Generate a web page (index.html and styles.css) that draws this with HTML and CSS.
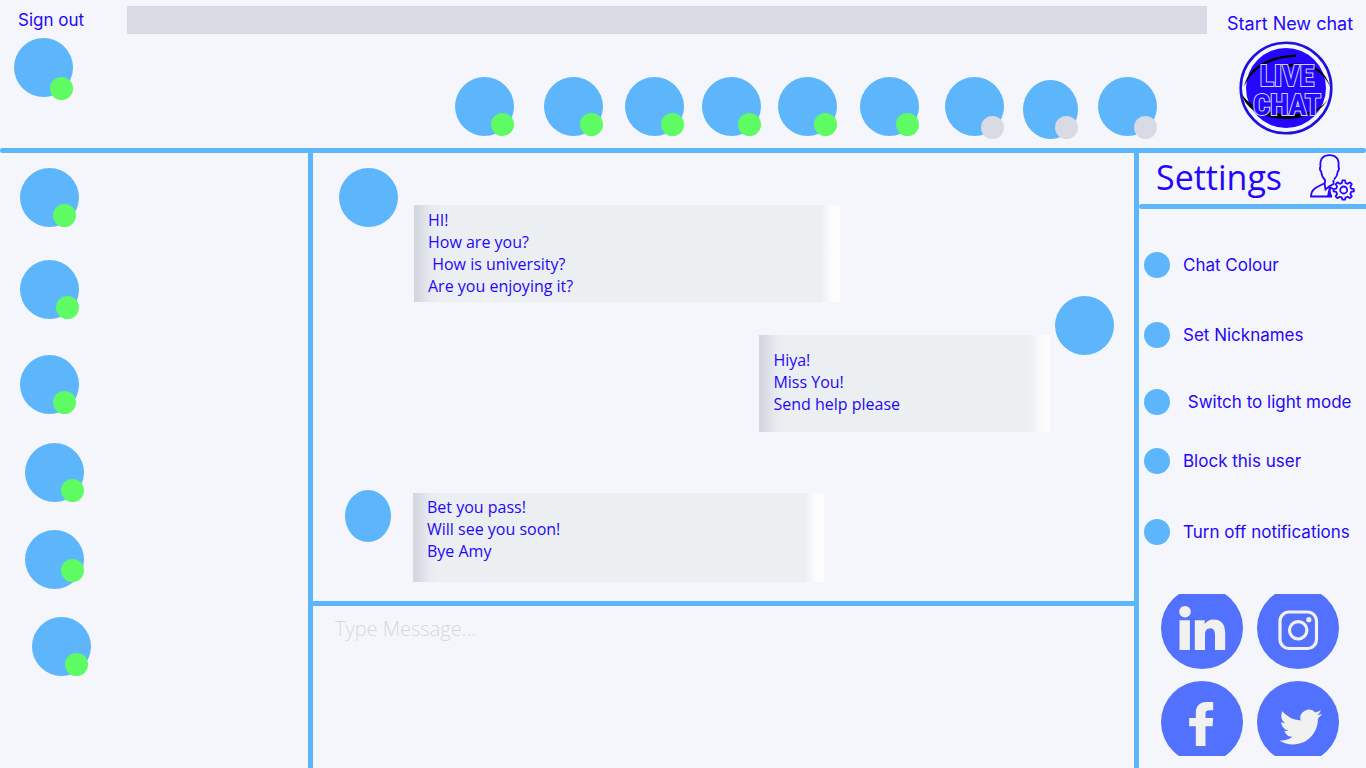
FILE: index.html
```html
<!DOCTYPE html>
<html lang="en">
<head>
  <meta charset="utf-8">
  <meta name="viewport" content="width=device-width, initial-scale=1">
  <title>Live Chat</title>
  <link rel="stylesheet" href="styles.css">
</head>
<body>
  <header class="topbar">
    <div class="account">
      <a class="link" href="#signout">Sign out</a>
      <span class="avatar"><span class="status status--low"></span></span>
    </div>

    <div class="people">
      <input class="search" type="search" aria-label="Search people">
      <ul class="people-list">
        <li><span class="avatar"><span class="status"></span></span></li>
        <li><span class="avatar"><span class="status"></span></span></li>
        <li><span class="avatar"><span class="status"></span></span></li>
        <li><span class="avatar"><span class="status"></span></span></li>
        <li><span class="avatar"><span class="status"></span></span></li>
        <li><span class="avatar"><span class="status"></span></span></li>
        <li><span class="avatar"><span class="status status--away status--low"></span></span></li>
        <li class="people-slim"><span class="avatar avatar--slim"><span class="status status--away"></span></span></li>
        <li><span class="avatar"><span class="status status--away status--low"></span></span></li>
      </ul>
    </div>

    <button class="new-chat" type="button">
      <span class="link link--large">Start New chat</span>
      <svg class="logo" viewBox="0 0 94 94" role="img" aria-label="Live chat">
        <circle cx="47" cy="47" r="45.3" fill="#f5f6fc" stroke="#1f10e0" stroke-width="2.6"/>
        <circle cx="47" cy="47" r="40" fill="#2407ff"/>
        <path d="M5 46C8 27 30 14 57 13.500V16C33 16 12 28 5 46Z"/>
        <path d="M36 27.500C57 18 85 21 91 46C83 24 58 20.500 36 29.500Z"/>
        <path d="M3 53C9 84 80 88 90.500 54C84 80 18 80 3 53Z"/>
        <text class="logo-text"><tspan x="48" y="45">LIVE</tspan><tspan x="48" y="74">CHAT</tspan></text>
      </svg>
    </button>
  </header>

  <div class="rule"></div>

  <div class="workspace">
    <nav class="contacts" aria-label="Contacts">
      <ul class="contacts-list">
        <li><span class="avatar"><span class="status status--inner"></span></span></li>
        <li><span class="avatar"><span class="status"></span></span></li>
        <li><span class="avatar"><span class="status status--inner"></span></span></li>
        <li class="indent"><span class="avatar"><span class="status"></span></span></li>
        <li class="indent"><span class="avatar"><span class="status status--high"></span></span></li>
        <li class="indent-more"><span class="avatar"><span class="status status--inner"></span></span></li>
      </ul>
    </nav>

    <main class="chat">
      <div class="thread">
        <article class="message">
          <span class="avatar"></span>
          <p class="bubble bubble--long">HI!
How are you?
 How is university?
Are you enjoying it?</p>
        </article>
        <article class="message message--own">
          <p class="bubble bubble--own">Hiya!
Miss You!
Send help please</p>
          <span class="avatar"></span>
        </article>
        <article class="message message--last">
          <span class="avatar avatar--small"></span>
          <p class="bubble bubble--last">Bet you pass!
Will see you soon!
Bye Amy</p>
        </article>
      </div>
      <div class="divider"></div>
      <textarea class="composer" aria-label="Message" placeholder="Type Message..."></textarea>
    </main>

    <aside class="settings">
      <div class="settings-head">
        <h1 class="settings-title">Settings</h1>
        <svg class="settings-icon" viewBox="0 0 48 50" aria-hidden="true" fill="none" stroke="#2407fa" stroke-width="1.800">
          <path d="M17 31V28C15 26 13.500 23 13.300 20C11.800 18 11.500 16 12.500 14.500C11.500 6 16 3.200 21.500 3.200S31.500 6 30.500 14.500C31.500 16 31 18 29.700 20C29.500 23 28 25.500 26 27.500"/>
          <path d="M17 31C10 35 3 36 3 44.500H24"/>
          <path d="M16.500 31L17.500 37.500L21 34.500L25 37M25.500 28V32L21 34.500"/>
          <path d="M21 35L19 44.500H24.500C22.500 41 22 38 23.500 35Z" fill="#2407fa" stroke="none"/>
          <path stroke-linejoin="round" stroke-width="2" transform="translate(35.700 38) scale(.88) translate(-35.700 -38.500)" d="M34.200 27.500h3l.6 3 2.400 1 2.600-1.700 2.100 2.100-1.700 2.600 1 2.400 3 .6v2.600l-3 .6-1 2.400 1.700 2.600-2.100 2.100-2.600-1.700-2.400 1-.6 2.400h-3l-.6-2.400-2.400-1-2.600 1.700-2.100-2.100 1.700-2.600-1-2.400-3-.6v-2.600l3-.6 1-2.400-1.700-2.600 2.100-2.100 2.600 1.700 2.400-1Z"/>
          <circle cx="35.700" cy="38" r="3.500"/>
        </svg>
      </div>
      <div class="divider divider--round"></div>
      <ul class="options">
        <li><button class="option" type="button"><span class="bullet"></span>Chat Colour</button></li>
        <li><button class="option" type="button"><span class="bullet"></span>Set Nicknames</button></li>
        <li><button class="option" type="button"><span class="bullet"></span>&nbsp;Switch to light mode</button></li>
        <li><button class="option" type="button"><span class="bullet"></span>Block this user</button></li>
        <li><button class="option" type="button"><span class="bullet"></span>Turn off notifications</button></li>
      </ul>
      <nav class="social" aria-label="Social media">
        <a class="social-link" href="#linkedin" aria-label="LinkedIn">
          <svg viewBox="0 0 82 82" fill="#f1f1f1">
            <circle cx="24" cy="24.700" r="5.800"/>
            <path d="M18.500 33.300H28.900V63H18.500ZM33.800 33.300H43.700V37.300C45.500 34.300 48.500 32.500 52.500 32.500C61 32.500 64.200 38 64.200 46.500V63H54V48.500C54 44.500 53 41.300 49.300 41.300C45.300 41.300 44 44.300 44 48V63H33.800Z"/>
          </svg>
        </a>
        <a class="social-link" href="#instagram" aria-label="Instagram">
          <svg viewBox="0 0 82 82" fill="none" stroke="#f1f1f1" stroke-width="3.200">
            <rect x="23" y="25" width="36.500" height="36.500" rx="9"/>
            <circle cx="41.200" cy="43.300" r="8.700"/>
            <circle cx="51.800" cy="32.700" r="2.600" fill="#f1f1f1" stroke="none"/>
          </svg>
        </a>
        <a class="social-link" href="#facebook" aria-label="Facebook">
          <svg viewBox="0 0 82 82" fill="#f1f1f1">
            <path d="M34.800 65V45.300H28.200V37H34.800V32C34.800 25 38.500 21 45.500 21H52.200V29.200H48C45.300 29.200 44.500 30.500 44.500 32.800V37H52.200L51.500 45.300H44.500V65Z"/>
          </svg>
        </a>
        <a class="social-link" href="#twitter" aria-label="Twitter">
          <svg viewBox="0 0 82 82" fill="#f1f1f1">
            <path transform="translate(22.500 24.700) scale(1.780)" d="M23.953 4.570a10 10 0 01-2.825.775 4.958 4.958 0 002.163-2.723c-.951.555-2.005.959-3.127 1.184a4.920 4.920 0 00-8.384 4.482C7.690 8.095 4.067 6.130 1.640 3.162a4.822 4.822 0 00-.666 2.475c0 1.710.870 3.213 2.188 4.096a4.904 4.904 0 01-2.228-.616v.060a4.923 4.923 0 003.946 4.827 4.996 4.996 0 01-2.212.085 4.936 4.936 0 004.604 3.417 9.867 9.867 0 01-6.102 2.105c-.390 0-.779-.023-1.170-.067a13.995 13.995 0 007.557 2.209c9.053 0 13.998-7.496 13.998-13.985 0-.210 0-.420-.015-.630A9.935 9.935 0 0024 4.590z"/>
          </svg>
        </a>
      </nav>
    </aside>
  </div>
</body>
</html>
```
FILE: styles.css
```css
:root {
  --page: #f5f6fc;
  --ink: #2407fa;
  --sky: #5db5fb;
  --online: #5efc62;
  --muted: #d8dbe4;
  --line: 5px;
}

* {
  box-sizing: border-box;
}

body {
  display: flex;
  flex-direction: column;
  min-height: 100vh;
  margin: 0;
  background: var(--page);
  color: var(--ink);
  font-family: "Open Sans", "Noto Sans", sans-serif;
  font-size: 16px;
  line-height: 22px;
}

ul {
  margin: 0;
  padding: 0;
  list-style: none;
}

button {
  padding: 0;
  border: 0;
  background: none;
  color: inherit;
  cursor: pointer;
}

.link,
.option {
  color: var(--ink);
  font-family: Inter, "Open Sans", sans-serif;
  font-size: 17px;
  font-weight: 400;
  line-height: 20px;
  text-decoration: none;
  white-space: nowrap;
}

.link--large {
  font-size: 18px;
}

/* Avatars */

.avatar {
  position: relative;
  display: block;
  flex: none;
  width: 59px;
  height: 59px;
  border-radius: 50%;
  background: var(--sky);
}

.avatar--slim {
  width: 55px;
}

.avatar--small {
  width: 46px;
  height: 52px;
}

.status {
  position: absolute;
  right: 0;
  bottom: 0;
  width: 23px;
  height: 23px;
  border-radius: 50%;
  background: var(--online);
}

.status--low {
  bottom: -3px;
}

.status--high {
  bottom: 7px;
}

.status--inner {
  right: 3px;
}

.status--away {
  background: var(--muted);
}

/* Top bar */

.topbar {
  display: grid;
  grid-template-columns: 127px 1fr 159px;
  min-height: 148px;
}

.account {
  display: flex;
  flex-direction: column;
  gap: 8px;
  padding: 10px 0 0 14px;
}

.account .link {
  padding-left: 4px;
}

.people {
  padding-top: 6px;
}

.search {
  display: block;
  width: 100%;
  height: 28px;
  padding: 0 12px;
  border: 0;
  background: var(--muted);
  color: var(--ink);
  font: inherit;
}

.people-list {
  display: grid;
  grid-template-columns: 89fr 81fr 77fr 77fr 82fr 85fr 78fr 75fr 59px;
  width: 65%;
  margin: 43px 50px 0 auto;
}

.people-slim {
  padding-top: 3px;
}

.new-chat {
  display: flex;
  flex-direction: column;
  align-items: flex-start;
  gap: 7px;
  padding: 14px 0 0 20px;
}

.logo {
  width: 94px;
  height: 94px;
  margin-left: 12px;
}

.logo-text {
  fill: #2407ff;
  stroke: #cfd4ff;
  stroke-width: 2;
  paint-order: stroke;
  font-family: "Liberation Sans Narrow", "Roboto Condensed", sans-serif;
  font-size: 30px;
  font-weight: 700;
  text-anchor: middle;
}

.rule {
  height: var(--line);
  border-radius: 3px;
  background: var(--sky);
}

/* Workspace */

.workspace {
  display: grid;
  flex: 1;
  grid-template-columns: 308px 1fr 227px;
}

.contacts {
  padding: 15px 20px;
}

.contacts-list {
  display: grid;
  grid-template-rows: 92px 95px 88px 87px 87px 59px;
}

.indent {
  padding-left: 5px;
}

.indent-more {
  padding-left: 12px;
}

.chat {
  display: flex;
  flex-direction: column;
  min-width: 0;
  border: solid var(--sky);
  border-width: 0 var(--line);
}

.thread {
  min-height: 448px;
  padding: 15px 20px 0 26px;
}

.message {
  display: flex;
  align-items: flex-start;
  gap: 16px;
}

.message--own {
  justify-content: flex-end;
  gap: 5px;
  margin-top: -6px;
}

.message--last {
  gap: 22px;
  margin-top: 58px;
  padding-left: 6px;
}

.bubble {
  margin: 37px 0 0;
  padding: 4px 14px 5px;
  background: linear-gradient(
    90deg,
    #d3d5df 0,
    #d8dbe3 6px,
    #e7ebef 16px,
    #ebeff2 26px,
    #ebeff2 calc(100% - 20px),
    #fcfcfd calc(100% - 8px),
    #fcfcfd 100%
  );
  white-space: pre-wrap;
}

.bubble--long {
  width: 55%;
}

.bubble--own {
  width: 37.5%;
  margin-top: 39px;
  padding: 14px 14px 17px;
}

.bubble--last {
  width: 53.5%;
  margin-top: 3px;
  padding: 3px 14px 20px;
}

.divider {
  flex: none;
  height: var(--line);
  background: var(--sky);
}

.divider--round {
  border-radius: 3px 0 0 3px;
}

.composer {
  flex: 1;
  width: 100%;
  min-height: 120px;
  padding: 9px 22px;
  border: 0;
  background: transparent;
  color: var(--ink);
  font-family: inherit;
  font-size: 20px;
  font-weight: 300;
  line-height: 28px;
  resize: none;
}

.composer::placeholder {
  color: #d4d6e1;
  opacity: 1;
}

/* Settings */

.settings {
  min-width: 0;
}

.settings-head {
  display: flex;
  align-items: center;
  justify-content: space-between;
  height: 51px;
  padding: 0 10px 4px 17px;
}

.settings-title {
  margin: 0;
  font-size: 34px;
  font-weight: 400;
  line-height: 46px;
}

.settings-icon {
  width: 48px;
  height: 50px;
}

.options {
  display: grid;
  grid-template-rows: 70px 67px 59px 71px 26px;
  padding: 43px 0 0 5px;
}

.option {
  display: flex;
  align-items: center;
  gap: 13px;
}

.bullet {
  flex: none;
  width: 26px;
  height: 26px;
  border-radius: 50%;
  background: var(--sky);
}

.social {
  display: grid;
  grid-template-columns: 82px 82px;
  gap: 12px 14px;
  align-content: center;
  width: 178px;
  height: 162px;
  margin: 49px 27px 12px auto;
  overflow: hidden;
}

.social-link {
  height: 82px;
  border-radius: 50%;
  background: #5271ff;
}

.social-link svg {
  display: block;
}
```
